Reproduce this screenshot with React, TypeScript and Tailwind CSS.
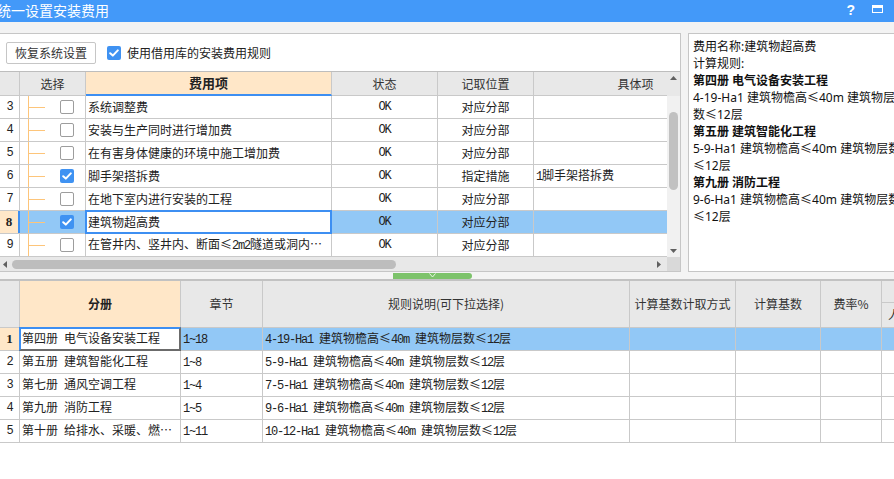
import React from "react";

const MONO = "font-['Liberation_Mono',monospace] text-[12px] tracking-[-1.2px]";
const G = "border-[#c9c9c9]";

function Sim({ t }: { t: string }) {
  const parts = t.split(/([\x20-\x7e]+)/).filter(Boolean);
  return (
    <span className="whitespace-pre">
      {parts.map((p, i) =>
        /^[\x20-\x7e]+$/.test(p) ? (
          <span key={i} className={MONO}>
            {p}
          </span>
        ) : (
          <span key={i}>{p}</span>
        )
      )}
    </span>
  );
}

function Box({ checked }: { checked: boolean }) {
  return checked ? (
    <div className="w-[14px] h-[14px] rounded-[2px] bg-[#3f92f2] flex items-center justify-center shrink-0">
      <svg width="10" height="8" viewBox="0 0 10 8">
        <path d="M1.2 4.2 L3.8 6.6 L8.8 1.4" fill="none" stroke="white" strokeWidth="2" strokeLinecap="round" strokeLinejoin="round" />
      </svg>
    </div>
  ) : (
    <div className="w-[14px] h-[14px] rounded-[2px] border border-[#9d9d9d] bg-white shrink-0" />
  );
}

type TopRow = { n: number; name: string; checked?: boolean; pos: string; spec?: string; sel?: boolean };

const topRows: TopRow[] = [
  { n: 3, name: "系统调整费", pos: "对应分部" },
  { n: 4, name: "安装与生产同时进行增加费", pos: "对应分部" },
  { n: 5, name: "在有害身体健康的环境中施工增加费", pos: "对应分部" },
  { n: 6, name: "脚手架搭拆费", checked: true, pos: "指定措施", spec: "1脚手架搭拆费" },
  { n: 7, name: "在地下室内进行安装的工程", pos: "对应分部" },
  { n: 8, name: "建筑物超高费", checked: true, pos: "对应分部", sel: true },
  { n: 9, name: "在管井内、竖井内、断面≤2m2隧道或洞内进行安装的工程", pos: "对应分部" },
];

const bottomRows = [
  { n: 1, a: "第四册 电气设备安装工程", c: "1~18", r: "4-19-Ha1 建筑物檐高≤40m 建筑物层数≤12层", sel: true },
  { n: 2, a: "第五册 建筑智能化工程", c: "1~8", r: "5-9-Ha1 建筑物檐高≤40m 建筑物层数≤12层" },
  { n: 3, a: "第七册 通风空调工程", c: "1~4", r: "7-5-Ha1 建筑物檐高≤40m 建筑物层数≤12层" },
  { n: 4, a: "第九册 消防工程", c: "1~5", r: "9-6-Ha1 建筑物檐高≤40m 建筑物层数≤12层" },
  { n: 5, a: "第十册 给排水、采暖、燃气工程", c: "1~11", r: "10-12-Ha1 建筑物檐高≤40m 建筑物层数≤12层" },
];

const infoLines: { t: string; b?: boolean }[] = [
  { t: "费用名称:建筑物超高费" },
  { t: "计算规则:" },
  { t: "第四册 电气设备安装工程", b: true },
  { t: "4-19-Ha1 建筑物檐高≤40m 建筑物层" },
  { t: "数≤12层" },
  { t: "第五册 建筑智能化工程", b: true },
  { t: "5-9-Ha1 建筑物檐高≤40m 建筑物层数" },
  { t: "≤12层" },
  { t: "第九册 消防工程", b: true },
  { t: "9-6-Ha1 建筑物檐高≤40m 建筑物层数" },
  { t: "≤12层" },
];

function TopTableRow({ r }: { r: TopRow }) {
  const blue = r.sel ? "bg-[#92c8f6]" : "bg-white";
  return (
    <div className={`flex h-[23px] border-b ${G} shrink-0`}>
      <div
        className={
          r.sel
            ? "w-[20px] shrink-0 border-r-2 border-r-[#3d8ff2] bg-[#ffe7c8] flex items-center justify-center font-bold font-['Liberation_Serif',serif] text-[13px]"
            : `w-[20px] shrink-0 border-r ${G} flex items-center justify-center ${MONO}`
        }
      >
        {r.n}
      </div>
      <div className={`w-[66px] shrink-0 border-r ${G} flex items-stretch ${blue}`}>
        <div className="w-[8px] shrink-0" />
        <div className="w-px shrink-0 bg-[#fdc57a]" />
        <div className="w-[16px] shrink-0 flex items-center">
          <div className="h-px w-full bg-[#fdc57a]" />
        </div>
        <div className="w-[15px] shrink-0" />
        <div className="flex items-center">
          <Box checked={!!r.checked} />
        </div>
      </div>
      <div className={`w-[246px] shrink-0 border-r ${G} relative flex items-center pl-[2px] bg-white`}>
        <div className="min-w-0 flex-1 truncate">
          <Sim t={r.name} />
        </div>
        {r.sel && <div className="absolute -top-[1px] -left-[1px] right-[-1px] -bottom-[1px] border-2 border-[#3d8ff2]" />}
      </div>
      <div className={`w-[106px] shrink-0 border-r ${G} flex items-center justify-center ${blue}`}>
        <span className={MONO}>OK</span>
      </div>
      <div className={`w-[96px] shrink-0 border-r ${G} flex items-center justify-center ${blue}`}>{r.pos}</div>
      <div className={`w-[203px] shrink-0 flex items-center pl-[2px] whitespace-nowrap ${blue}`}>
        {r.spec ? <Sim t={r.spec} /> : null}
      </div>
    </div>
  );
}

export default function App() {
  return (
    <div className="w-[894px] h-[479px] overflow-hidden bg-white flex flex-col font-['Noto_Sans_CJK_SC',sans-serif] text-[12px] text-[#222]">
      {/* Title bar */}
      <div className="h-[22px] shrink-0 bg-[#4399f9] flex items-center text-white">
        <div className="-ml-[3px] text-[14px] leading-[16px] pb-[3px] whitespace-nowrap">统一设置安装费用</div>
        <div className="ml-auto flex items-center pr-[11px] gap-[17px]">
          <span className="font-['Liberation_Sans',sans-serif] font-bold text-[14px] leading-[14px] pb-[2px]">?</span>
          <div className="w-[11px] h-[8px] border-[1.5px] border-t-[3px] border-white mb-[4px]" />
        </div>
      </div>
      <div className="h-[11px] shrink-0 bg-[#f3f3f3]" />

      {/* Middle */}
      <div className="h-[239px] shrink-0 flex bg-[#f3f3f3]">
        <div className="w-[681px] shrink-0 border-t border-r border-b border-[#c6c6c6] bg-white flex flex-col">
          {/* toolbar */}
          <div className="h-[37px] shrink-0 flex items-center pl-[6px]">
            <div className="w-[90px] h-[22px] border border-[#c6c6c6] rounded-[2px] bg-white flex items-center justify-center text-[#333] mt-[1px]">
              恢复系统设置
            </div>
            <div className="ml-[11px]">
              <Box checked />
            </div>
            <span className="ml-[6px] text-[#222]">使用借用库的安装费用规则</span>
          </div>
          <div className="h-px shrink-0 bg-[#bdbdbd]" />
          <div className="flex flex-1 min-h-0">
            <div className="w-[667px] shrink-0 overflow-hidden flex flex-col">
              {/* header */}
              <div className="flex h-[24px] shrink-0 bg-[#e8e8e8] text-[#333]">
                <div className={`w-[20px] shrink-0 border-r border-b ${G}`} />
                <div className={`w-[66px] shrink-0 border-r border-b ${G} flex items-center justify-center`}>选择</div>
                <div className={`w-[246px] shrink-0 border-r ${G} border-b-2 border-b-[#3d8ff2] bg-[#ffe7c8] flex items-center justify-center font-bold text-[13px] text-[#222]`}>
                  费用项
                </div>
                <div className={`w-[106px] shrink-0 border-r border-b ${G} flex items-center justify-center`}>状态</div>
                <div className={`w-[96px] shrink-0 border-r border-b ${G} flex items-center justify-center`}>记取位置</div>
                <div className={`w-[203px] shrink-0 border-b ${G} flex items-center justify-center`}>具体项</div>
              </div>
              {topRows.map((r) => (
                <TopTableRow key={r.n} r={r} />
              ))}
              {/* horizontal scrollbar */}
              <div className="h-[14px] shrink-0 bg-[#e8e8e8] flex items-center">
                <svg className="ml-[3px] shrink-0" width="4" height="7" viewBox="0 0 4 7">
                  <path d="M4 0 L0 3.5 L4 7 Z" fill="#606060" />
                </svg>
                <div className="ml-[5px] w-[384px] h-[9px] rounded-full bg-[#bdbdbd] shrink-0" />
                <svg className="ml-auto mr-[6px] shrink-0" width="4" height="7" viewBox="0 0 4 7">
                  <path d="M0 0 L4 3.5 L0 7 Z" fill="#606060" />
                </svg>
              </div>
            </div>
            {/* vertical scrollbar */}
            <div className="w-[13px] shrink-0 flex flex-col">
              <div className="h-[24px] shrink-0 bg-[#e8e8e8] flex justify-center pt-[4px]">
                <svg width="7" height="4" viewBox="0 0 7 4">
                  <path d="M0 4 L3.5 0 L7 4 Z" fill="#606060" />
                </svg>
              </div>
              <div className="flex-1 bg-[#f1f1f1] flex flex-col items-center">
                <div className="mt-[16px] w-[9px] h-[78px] rounded-full bg-[#c1c1c1]" />
                <div className="flex-1" />
                <svg className="mb-[4px]" width="7" height="4" viewBox="0 0 7 4">
                  <path d="M0 0 L3.5 4 L7 0 Z" fill="#606060" />
                </svg>
              </div>
              <div className="h-[14px] shrink-0 bg-[#d9d9d9]" />
            </div>
          </div>
        </div>
        <div className="w-[7px] shrink-0" />
        {/* right info panel */}
        <div className="w-[240px] shrink-0 border-l border-t border-b border-[#c6c6c6] bg-white pt-[4px] pl-[4px] font-['Noto_Sans','Noto_Sans_CJK_SC',sans-serif] text-[12px] text-[#111]">
          {infoLines.map((l, i) => (
            <div key={i} className={`h-[17px] leading-[17px] whitespace-nowrap ${l.b ? "font-bold" : ""}`}>
              {l.t}
            </div>
          ))}
        </div>
      </div>

      {/* splitter */}
      <div className="h-[7px] shrink-0 bg-[#f4f4f4] flex items-start">
        <div className="ml-[393px] mt-[1px] w-[79px] h-[6px] rounded-r-[3px] bg-[#7dc36b] flex justify-center">
          <svg width="7" height="5" viewBox="0 0 7 5">
            <path d="M0.5 0.5 L3.5 4 L6.5 0.5" fill="none" stroke="#e8f5e3" strokeWidth="1" />
          </svg>
        </div>
      </div>
      <div className="h-[2px] shrink-0 bg-[#c2c2c2]" />

      {/* bottom table */}
      <div className="flex-1 flex flex-col bg-white overflow-hidden">
        <div className={`flex h-[47px] shrink-0 border-b ${G} bg-[#e8e8e8] text-[#333]`}>
          <div className={`w-[20px] shrink-0 border-r ${G}`} />
          <div className={`w-[161px] shrink-0 border-r ${G} bg-[#ffe7c8] flex items-center justify-center font-bold text-[#222]`}>分册</div>
          <div className={`w-[82px] shrink-0 border-r ${G} flex items-center justify-center`}>章节</div>
          <div className={`w-[367px] shrink-0 border-r ${G} flex items-center justify-center`}>规则说明(可下拉选择)</div>
          <div className={`w-[106px] shrink-0 border-r ${G} flex items-center justify-center`}>计算基数计取方式</div>
          <div className={`w-[85px] shrink-0 border-r ${G} flex items-center justify-center`}>计算基数</div>
          <div className={`w-[61px] shrink-0 border-r ${G} flex items-center justify-center`}>费率%</div>
          <div className="w-[100px] shrink-0 flex flex-col">
            <div className={`h-[22px] shrink-0 border-b ${G}`} />
            <div className="flex-1 flex items-center pl-[6px]">人工费</div>
          </div>
        </div>
        {bottomRows.map((r) => {
          const bg = r.sel ? "bg-[#92c8f6]" : "bg-white";
          return (
            <div key={r.n} className={`flex h-[23px] shrink-0 border-b ${G}`}>
              <div
                className={
                  r.sel
                    ? `w-[20px] shrink-0 border-r ${G} bg-[#ffe7c8] flex items-center justify-center font-bold font-['Liberation_Serif',serif] text-[13px]`
                    : `w-[20px] shrink-0 border-r ${G} flex items-center justify-center ${MONO}`
                }
              >
                {r.n}
              </div>
              <div className={`w-[161px] shrink-0 border-r ${G} relative flex items-center pl-[2px] bg-white`}>
                <div className="min-w-0 flex-1 truncate">
                  <Sim t={r.a} />
                </div>
                {r.sel && (
                  <div className="absolute -top-[1px] -left-[1px] right-[-1px] -bottom-[1px] border-2 border-l-[#3d8ff2] border-t-[#3d8ff2] border-r-[#6b6b6b] border-b-[#6b6b6b]" />
                )}
              </div>
              <div className={`w-[82px] shrink-0 border-r ${G} flex items-center pl-[2px] ${bg}`}>
                <Sim t={r.c} />
              </div>
              <div className={`w-[367px] shrink-0 border-r ${G} flex items-center pl-[2px] whitespace-nowrap ${bg}`}>
                <Sim t={r.r} />
              </div>
              <div className={`w-[106px] shrink-0 border-r ${G} ${bg}`} />
              <div className={`w-[85px] shrink-0 border-r ${G} ${bg}`} />
              <div className={`w-[61px] shrink-0 border-r ${G} ${bg}`} />
              <div className={`w-[100px] shrink-0 ${bg}`} />
            </div>
          );
        })}
      </div>
    </div>
  );
}
